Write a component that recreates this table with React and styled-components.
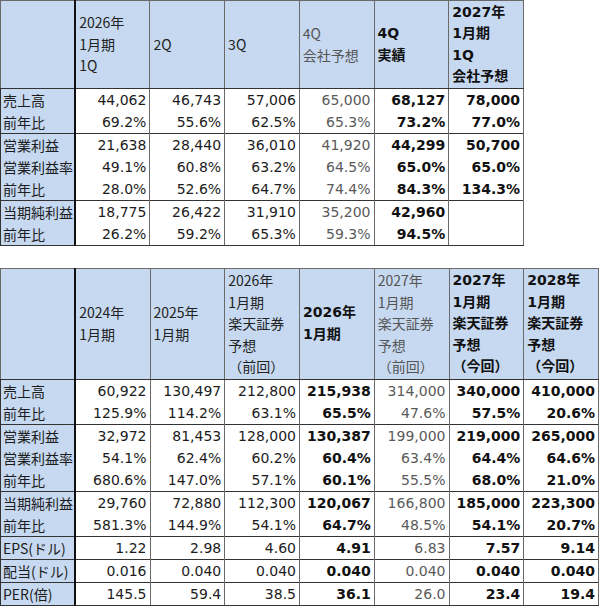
import React from "react";
import styled, { createGlobalStyle, css } from "styled-components";

const Global = createGlobalStyle`
  html, body { margin: 0; padding: 0; background: #fff; }
  body { font-family: "DejaVu Sans", "Noto Sans CJK JP", sans-serif; color: #1c1c1c; }
`;

const Page = styled.div`
  display: flex;
  flex-direction: column;
  gap: 22px;
  width: 600px;
`;

const Table = styled.table`
  border-collapse: collapse;
  table-layout: fixed;
  width: ${(p) => p.$cols * 75 - 1}px;
  font-size: 14px;
`;

const HeadCell = styled.th`
  background: #c6d9f0;
  border: 1px solid #6a6a6a;
  border-bottom: 1px solid #333;
  text-align: left;
  vertical-align: middle;
  padding: 0 0 0 3px;
  height: ${(p) => p.$h}px;
  line-height: ${(p) => p.$lh}px;
  font-family: "Noto Sans CJK JP", sans-serif;
  font-weight: 400;
  font-size: 14px;
  white-space: pre-line;
  color: #222;
  ${(p) => p.$first && css`border-right: 2px solid #111;`}
  ${(p) => p.$kind === "gray" && css`color: #555;`}
  ${(p) => p.$kind === "bold" && css`
    font-family: "DejaVu Sans", "Noto Sans CJK JP", sans-serif;
    font-weight: 700;
    color: #111;
  `}
`;

const Label = styled.td`
  background: #c6d9f0;
  border-left: 1px solid #333;
  border-right: 2px solid #111;
  border-top: ${(p) => (p.$groupStart ? "1px solid #333" : "none")};
  padding: 0 0 0 2px;
  height: 22px;
  line-height: 22px;
  font-family: "Noto Sans CJK JP", sans-serif;
  font-size: 14px;
  white-space: nowrap;
  overflow: hidden;
  color: #1c1c1c;
`;

const Num = styled.td`
  border-left: 1px solid #6a6a6a;
  border-right: 1px solid #6a6a6a;
  border-top: ${(p) => (p.$groupStart ? "1px solid #333" : "none")};
  text-align: right;
  padding: 0 3px 0 0;
  height: 22px;
  line-height: 22px;
  font-size: 14px;
  white-space: nowrap;
  color: #1c1c1c;
  ${(p) => p.$kind === "gray" && css`color: #5a5a5a;`}
  ${(p) => p.$kind === "bold" && css`font-weight: 700; color: #111;`}
`;

const Row = styled.tr`
  &:last-child td { border-bottom: 1px solid #333; }
`;

function DataTable({ cols, headH, headLH, rows }) {
  return (
    <Table $cols={cols.length + 1}>
      <thead>
        <tr>
          <HeadCell $first $h={headH} $lh={headLH} />
          {cols.map((c, i) => (
            <HeadCell key={i} $h={headH} $lh={headLH} $kind={c.kind}>
              {c.title}
            </HeadCell>
          ))}
        </tr>
      </thead>
      <tbody>
        {rows.map((r, i) => (
          <Row key={i}>
            <Label $groupStart={r.g}>{r.label}</Label>
            {cols.map((c, j) => (
              <Num key={j} $groupStart={r.g} $kind={c.kind}>
                {r.v[j]}
              </Num>
            ))}
          </Row>
        ))}
      </tbody>
    </Table>
  );
}

const cols1 = [
  { title: "2026年\n1月期\n1Q", kind: "normal" },
  { title: "2Q", kind: "normal" },
  { title: "3Q", kind: "normal" },
  { title: "4Q\n会社予想", kind: "gray" },
  { title: "4Q\n実績", kind: "bold" },
  { title: "2027年\n1月期\n1Q\n会社予想", kind: "bold" },
];

const rows1 = [
  { label: "売上高", g: true, v: ["44,062", "46,743", "57,006", "65,000", "68,127", "78,000"] },
  { label: "前年比", v: ["69.2%", "55.6%", "62.5%", "65.3%", "73.2%", "77.0%"] },
  { label: "営業利益", g: true, v: ["21,638", "28,440", "36,010", "41,920", "44,299", "50,700"] },
  { label: "営業利益率", v: ["49.1%", "60.8%", "63.2%", "64.5%", "65.0%", "65.0%"] },
  { label: "前年比", v: ["28.0%", "52.6%", "64.7%", "74.4%", "84.3%", "134.3%"] },
  { label: "当期純利益", g: true, v: ["18,775", "26,422", "31,910", "35,200", "42,960", ""] },
  { label: "前年比", v: ["26.2%", "59.2%", "65.3%", "59.3%", "94.5%", ""] },
];

const cols2 = [
  { title: "2024年\n1月期", kind: "normal" },
  { title: "2025年\n1月期", kind: "normal" },
  { title: "2026年\n1月期\n楽天証券\n予想\n（前回）", kind: "normal" },
  { title: "2026年\n1月期", kind: "bold" },
  { title: "2027年\n1月期\n楽天証券\n予想\n（前回）", kind: "gray" },
  { title: "2027年\n1月期\n楽天証券\n予想\n（今回）", kind: "bold" },
  { title: "2028年\n1月期\n楽天証券\n予想\n（今回）", kind: "bold" },
];

const rows2 = [
  { label: "売上高", g: true, v: ["60,922", "130,497", "212,800", "215,938", "314,000", "340,000", "410,000"] },
  { label: "前年比", v: ["125.9%", "114.2%", "63.1%", "65.5%", "47.6%", "57.5%", "20.6%"] },
  { label: "営業利益", g: true, v: ["32,972", "81,453", "128,000", "130,387", "199,000", "219,000", "265,000"] },
  { label: "営業利益率", v: ["54.1%", "62.4%", "60.2%", "60.4%", "63.4%", "64.4%", "64.6%"] },
  { label: "前年比", v: ["680.6%", "147.0%", "57.1%", "60.1%", "55.5%", "68.0%", "21.0%"] },
  { label: "当期純利益", g: true, v: ["29,760", "72,880", "112,300", "120,067", "166,800", "185,000", "223,300"] },
  { label: "前年比", v: ["581.3%", "144.9%", "54.1%", "64.7%", "48.5%", "54.1%", "20.7%"] },
  { label: "EPS(ドル)", g: true, v: ["1.22", "2.98", "4.60", "4.91", "6.83", "7.57", "9.14"] },
  { label: "配当(ドル)", g: true, v: ["0.016", "0.040", "0.040", "0.040", "0.040", "0.040", "0.040"] },
  { label: "PER(倍)", g: true, v: ["145.5", "59.4", "38.5", "36.1", "26.0", "23.4", "19.4"] },
];

export default function App() {
  return (
    <>
      <Global />
      <Page>
        <DataTable cols={cols1} headH={87} headLH={21.5} rows={rows1} />
        <DataTable cols={cols2} headH={110} headLH={21.6} rows={rows2} />
      </Page>
    </>
  );
}
